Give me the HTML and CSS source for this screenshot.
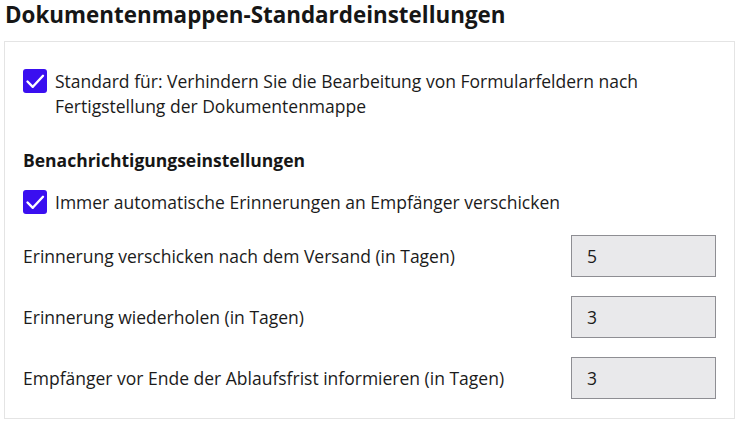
FILE: index.html
```html
<!DOCTYPE html>
<html lang="de">
<head>
<meta charset="utf-8">
<link rel="stylesheet" href="styles.css">
</head>
<body>
<h1 class="title">Dokumentenmappen-Standardeinstellungen</h1>
<div class="card">
  <label class="check">
    <span class="box"><svg viewBox="0 0 24 24" width="24" height="24"><path d="M4.5 12.5 L9.8 17.8 L20 6.8" fill="none" stroke="#fff" stroke-width="2.4" stroke-linecap="round" stroke-linejoin="round"/></svg></span>
    <span class="check-text">Standard für: Verhindern Sie die Bearbeitung von Formularfeldern nach Fertigstellung der Dokumentenmappe</span>
  </label>
  <h2 class="section">Benachrichtigungseinstellungen</h2>
  <label class="check">
    <span class="box"><svg viewBox="0 0 24 24" width="24" height="24"><path d="M4.5 12.5 L9.8 17.8 L20 6.8" fill="none" stroke="#fff" stroke-width="2.4" stroke-linecap="round" stroke-linejoin="round"/></svg></span>
    <span class="check-text">Immer automatische Erinnerungen an Empfänger verschicken</span>
  </label>
  <div class="rows">
    <div class="row"><span class="row-label">Erinnerung verschicken nach dem Versand (in Tagen)</span><div class="field">5</div></div>
    <div class="row"><span class="row-label">Erinnerung wiederholen (in Tagen)</span><div class="field">3</div></div>
    <div class="row"><span class="row-label">Empfänger vor Ende der Ablaufsfrist informieren (in Tagen)</span><div class="field">3</div></div>
  </div>
</div>
</body>
</html>
```

FILE: styles.css
```css
html, body {
  margin: 0;
  padding: 0;
  background: #ffffff;
}
body {
  font-family: "Open Sans", "Noto Sans", sans-serif;
  color: #1b1b1b;
  width: 739px;
  height: 426px;
  overflow: hidden;
}
.title {
  margin: 0;
  padding-left: 5px;
  font-size: 22.4px;
  line-height: 30px;
  font-weight: 700;
  color: #161616;
}
.card {
  margin: 11px 0 0 4px;
  width: 731px;
  border: 1px solid #e4e4e4;
  padding: 27px 0 20px 18px;
  box-sizing: border-box;
  height: 378px;
}
.check {
  display: flex;
  align-items: flex-start;
  gap: 8px;
  font-size: 17.5px;
  line-height: 25px;
}
.box {
  flex: 0 0 24px;
  width: 24px;
  height: 24px;
  border-radius: 3px;
  background: #3a0ff0;
  display: flex;
}
.check-text {
  width: 620px;
}
.section {
  margin: 29px 0 18px 0;
  font-size: 17.5px;
  line-height: 24px;
  font-weight: 700;
  color: #161616;
}
.rows {
  display: flex;
  flex-direction: column;
  gap: 19px;
  margin-top: 20px;
}
.row {
  display: flex;
  align-items: center;
  justify-content: space-between;
  width: 693px;
  font-size: 17.5px;
}
.field {
  width: 145px;
  height: 42px;
  box-sizing: border-box;
  border: 1px solid #8e8e93;
  background: #e9e9eb;
  padding-left: 15px;
  display: flex;
  align-items: center;
  font-size: 17.5px;
}
```
